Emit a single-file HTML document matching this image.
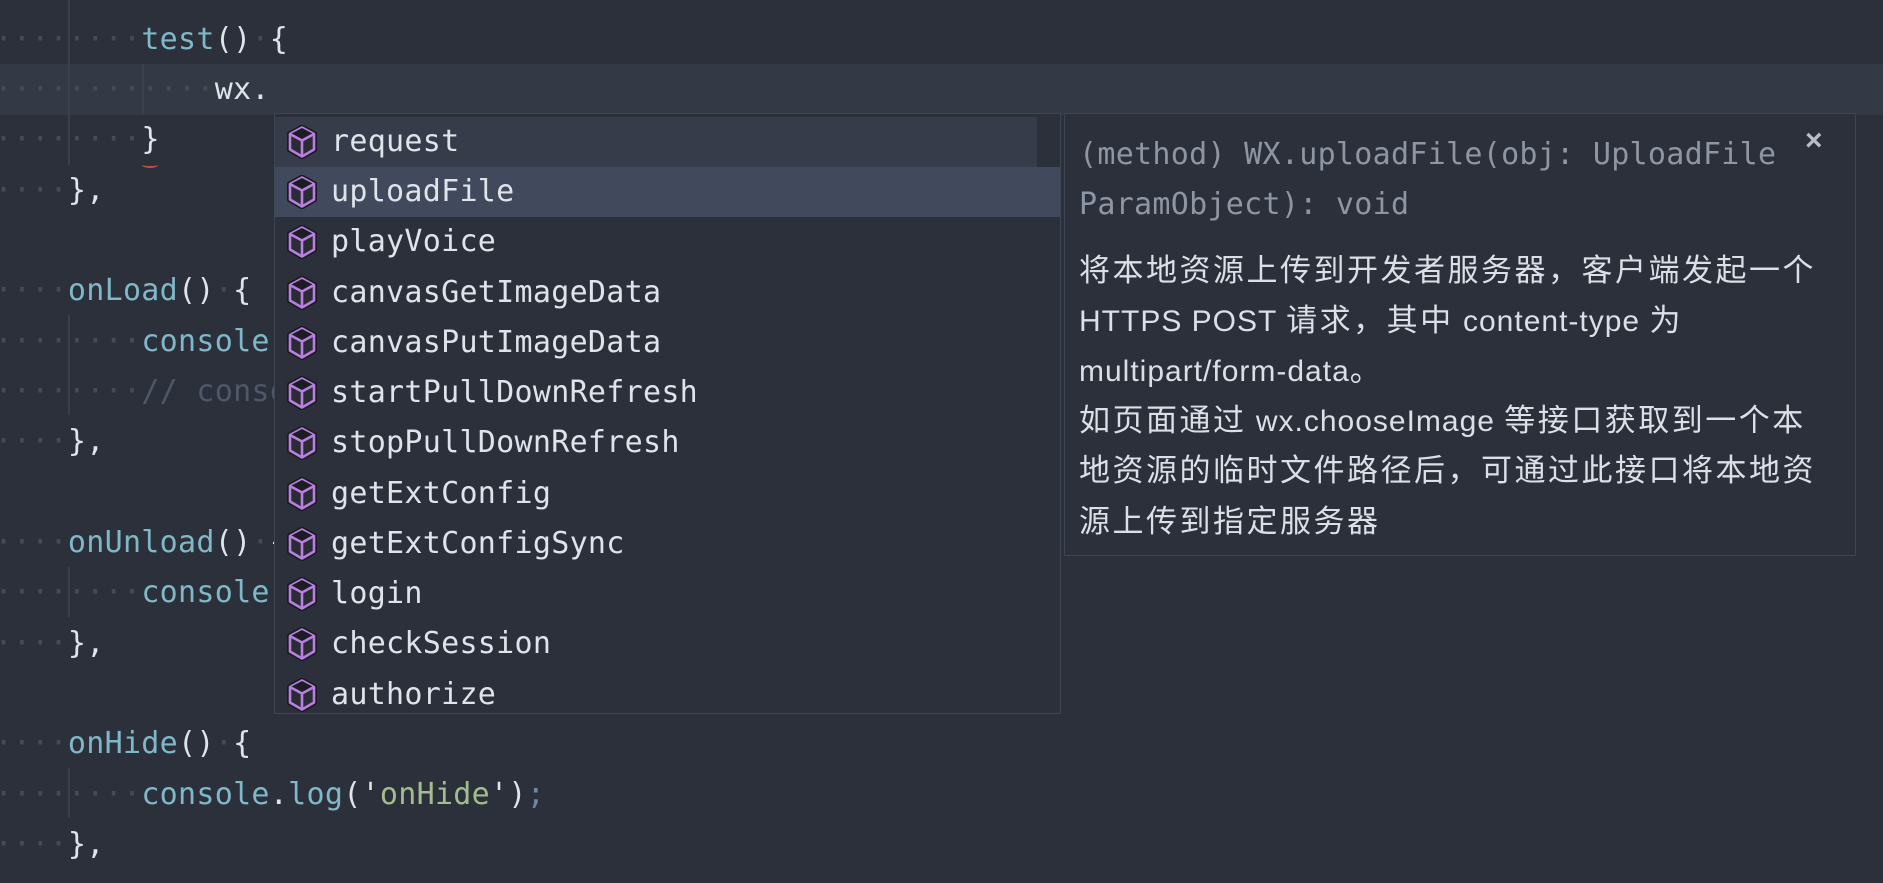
<!DOCTYPE html>
<html><head><meta charset="utf-8"><style>
html,body{margin:0;padding:0;}
body{width:1883px;height:883px;overflow:hidden;background:#2b303b;position:relative;font-family:"DejaVu Sans Mono","Liberation Mono",monospace;}
.ln{position:absolute;left:-5.5px;height:50px;line-height:50px;font-size:30px;letter-spacing:0.29px;white-space:pre;color:#dfe3ea;margin-top:3px;}
.d{color:#444b5a;}
.f{color:#7fb8c8;}
.c{color:#4f5868;}
.s{color:#a3be8c;}
.sc{color:#6f86a8;}
.g{position:absolute;width:2px;background:#3a404d;}
#cur{position:absolute;left:0;top:64px;width:1883px;height:51px;background:#333945;}
#sug{position:absolute;left:274px;top:113px;width:787px;height:601px;background:#2b303b;border:1px solid #3e4554;box-sizing:border-box;}
.it{position:absolute;left:0;width:785px;height:50px;line-height:50px;font-size:30px;color:#dfe3ea;white-space:pre;letter-spacing:0.29px;}
.it svg{position:absolute;left:11px;top:8px;}
.it span{position:absolute;left:56px;}
#tip{position:absolute;left:1064px;top:113px;width:792px;height:443px;background:#2b303b;border:1px solid #3e4554;box-sizing:border-box;}
.sig{position:absolute;left:14px;font-size:30px;color:#8f96a3;white-space:pre;letter-spacing:0.29px;line-height:50px;height:50px;margin-top:3px;}
.zh{position:absolute;left:14px;font-family:"Liberation Sans","Noto Sans CJK SC",sans-serif;font-size:31px;letter-spacing:2.5px;color:#dbdfe6;white-space:pre;line-height:50px;height:50px;margin-top:1px;}
.zh i{font-style:normal;letter-spacing:1px;font-size:30px;}
</style></head><body>
<div id="cur"></div>
<div class="g" style="left:68px;top:0;height:165px"></div>
<div class="g" style="left:142px;top:64px;height:51px"></div>
<div class="g" style="left:68px;top:315px;height:100px"></div>
<div class="g" style="left:68px;top:567px;height:50px"></div>
<div class="g" style="left:68px;top:768px;height:50px"></div>

<div class="ln" style="top:12px"><span class="d">········</span><span class="f">test</span>()<span class="d">·</span>{</div>
<div class="ln" style="top:62px"><span class="d">············</span>wx.</div>
<div class="ln" style="top:112px"><span class="d">········</span>}</div>
<div style="position:absolute;left:142px;top:162px;width:16px;height:4px;border-bottom:2px solid #c0504d;border-radius:50%"></div>
<div class="ln" style="top:163px"><span class="d">····</span>},</div>
<div class="ln" style="top:263px"><span class="d">····</span><span class="f">onLoad</span>()<span class="d">·</span>{</div>
<div class="ln" style="top:314px"><span class="d">········</span><span class="f">console</span>.log</div>
<div class="ln" style="top:364px"><span class="d">········</span><span class="c">// console</span></div>
<div class="ln" style="top:414px"><span class="d">····</span>},</div>
<div class="ln" style="top:515px"><span class="d">····</span><span class="f">onUnload</span>()<span class="d">·</span>{</div>
<div class="ln" style="top:565px"><span class="d">········</span><span class="f">console</span>.log</div>
<div class="ln" style="top:616px"><span class="d">····</span>},</div>
<div class="ln" style="top:716px"><span class="d">····</span><span class="f">onHide</span>()<span class="d">·</span>{</div>
<div class="ln" style="top:767px"><span class="d">········</span><span class="f">console</span>.<span class="f">log</span>('<span class="s">onHide</span>')<span class="sc">;</span></div>
<div class="ln" style="top:817px"><span class="d">····</span>},</div>

<svg width="0" height="0" style="position:absolute"><defs><g id="cube"><path d="M16 1.5 L29 8.5 L29 25 L16 32.5 L3 25 L3 8.5 Z" fill="#25272d" stroke="#1a1c20" stroke-width="4" stroke-linejoin="round"/><path d="M16 2.5 L28 9 L28 24.5 L16 31.5 L4 24.5 L4 9 Z" fill="#2a2c33" stroke="#b87ee2" stroke-width="2.6" stroke-linejoin="round"/><path d="M16 3 L27.5 9 L16 15.5 L4.5 9 Z" fill="#1c1d22"/><path d="M4 9 L16 15.5 L28 9 M16 15.5 L16 31.5" fill="none" stroke="#b87ee2" stroke-width="2.6" stroke-linejoin="round"/></g></defs></svg>

<div id="sug">
<div style="position:absolute;left:0;top:3px;width:762px;height:50px;background:#363c49"></div>
<div style="position:absolute;left:0;top:53px;width:785px;height:50px;background:#414a5c"></div>
<div class="it" style="top:3px"><svg width="32" height="34"><use href="#cube"/></svg><span>request</span></div>
<div class="it" style="top:53px"><svg width="32" height="34"><use href="#cube"/></svg><span>uploadFile</span></div>
<div class="it" style="top:103px"><svg width="32" height="34"><use href="#cube"/></svg><span>playVoice</span></div>
<div class="it" style="top:154px"><svg width="32" height="34"><use href="#cube"/></svg><span>canvasGetImageData</span></div>
<div class="it" style="top:204px"><svg width="32" height="34"><use href="#cube"/></svg><span>canvasPutImageData</span></div>
<div class="it" style="top:254px"><svg width="32" height="34"><use href="#cube"/></svg><span>startPullDownRefresh</span></div>
<div class="it" style="top:304px"><svg width="32" height="34"><use href="#cube"/></svg><span>stopPullDownRefresh</span></div>
<div class="it" style="top:355px"><svg width="32" height="34"><use href="#cube"/></svg><span>getExtConfig</span></div>
<div class="it" style="top:405px"><svg width="32" height="34"><use href="#cube"/></svg><span>getExtConfigSync</span></div>
<div class="it" style="top:455px"><svg width="32" height="34"><use href="#cube"/></svg><span>login</span></div>
<div class="it" style="top:505px"><svg width="32" height="34"><use href="#cube"/></svg><span>checkSession</span></div>
<div class="it" style="top:556px"><svg width="32" height="34"><use href="#cube"/></svg><span>authorize</span></div>
</div>

<div id="tip">
<div class="sig" style="top:13px">(method) WX.uploadFile(obj: UploadFile</div>
<div style="position:absolute;left:740px;top:10px;font-family:'Liberation Sans',sans-serif;font-size:30px;font-weight:bold;color:#b8bec9">×</div>
<div class="sig" style="top:63px">ParamObject): void</div>
<div class="zh" style="top:131px">将本地资源上传到开发者服务器，客户端发起一个</div>
<div class="zh" style="top:181px"><i>HTTPS POST </i>请求，其中<i> content-type </i>为</div>
<div class="zh" style="top:231px"><i>multipart/form-data</i>。</div>
<div class="zh" style="top:281px">如页面通过<i> wx.chooseImage </i>等接口获取到一个本</div>
<div class="zh" style="top:331px">地资源的临时文件路径后，可通过此接口将本地资</div>
<div class="zh" style="top:382px">源上传到指定服务器</div>
</div>
</body></html>
